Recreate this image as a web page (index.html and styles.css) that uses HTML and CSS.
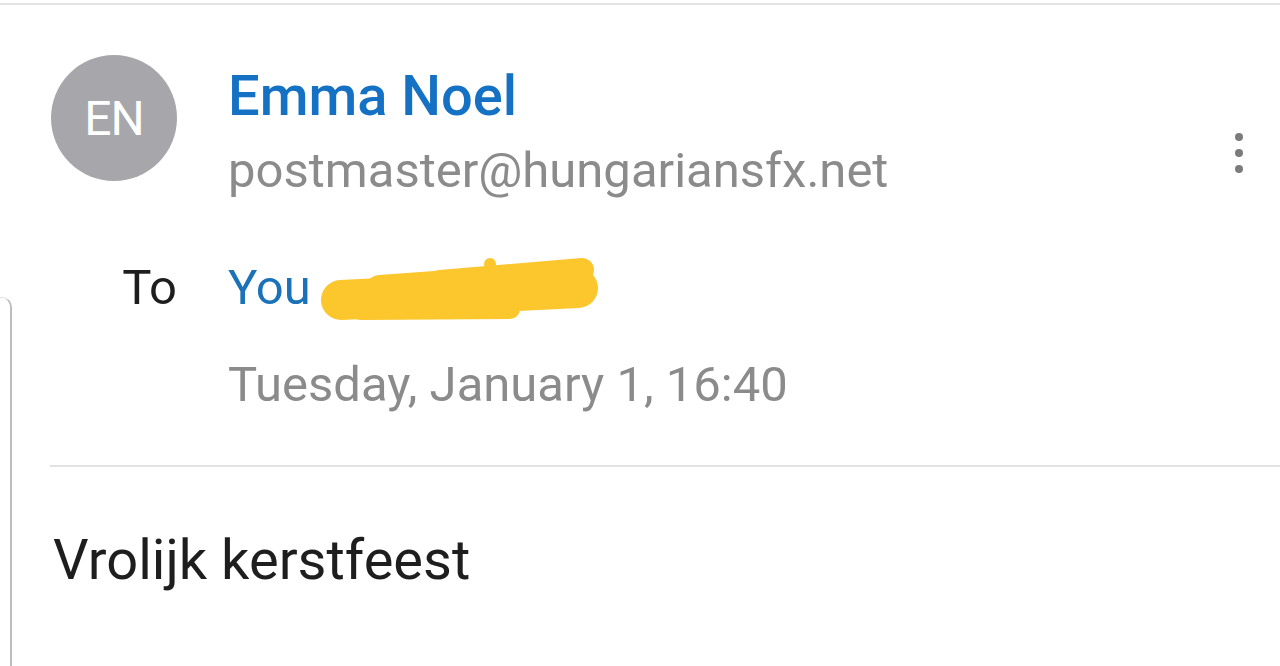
FILE: index.html
```html
<!DOCTYPE html>
<html lang="en">
<head>
<meta charset="utf-8">
<title>Message</title>
<link rel="stylesheet" href="styles.css">
</head>
<body>
<div class="topline"></div>
<div class="page">
  <div class="edge"></div>
  <div class="main">
    <div class="header">
      <div class="avatar">EN</div>
      <div class="sender">
        <div class="name">Emma Noel</div>
        <div class="email">postmaster@hungariansfx.net</div>
      </div>
      <div class="kebab" aria-label="More options">
        <span class="dot"></span><span class="dot"></span><span class="dot"></span>
      </div>
      <div class="to-label">To</div>
      <div class="to-value">
        <span class="you">You</span>
        <svg class="scribble" width="282" height="70" viewBox="0 0 282 70" aria-hidden="true">
          <g stroke="#fcc62d" stroke-linecap="round" fill="none">
            <path d="M21 46 L258 34" stroke-width="40"/>
            <path d="M60 36 L250 22" stroke-width="30"/>
            <path d="M120 28 L262 16" stroke-width="24"/>
            <path d="M40 56 L190 55" stroke-width="20"/>
          </g>
          <circle cx="170" cy="10" r="6" fill="#fcc62d"/>
        </svg>
      </div>
      <div class="date">Tuesday, January 1, 16:40</div>
    </div>
    <div class="divider"></div>
    <div class="body-text">Vrolijk kerstfeest</div>
  </div>
</div>
</body>
</html>
```
FILE: styles.css
```css
html, body {
  margin: 0;
  padding: 0;
  background: #ffffff;
  height: 100%;
  overflow: hidden;
}

body {
  font-family: Roboto, "Noto Sans", "Liberation Sans", sans-serif;
}

.topline {
  margin-top: 3px;
  height: 2px;
  background: #e4e4e4;
}

.page {
  display: flex;
  align-items: flex-start;
  height: 661px;
}

.edge {
  flex: 0 0 12px;
  margin-top: 292px;
  height: 400px;
  border-top: 1px solid #e2e2e2;
  border-right: 2px solid #bdbdbd;
  border-top-right-radius: 10px;
  box-sizing: border-box;
}

.main {
  flex: 1;
  padding-left: 39px;
}

.header {
  display: grid;
  grid-template-columns: 126px 1fr 40px;
  column-gap: 51px;
  padding-right: 21px;
  margin-top: 50px;
}

.avatar {
  grid-column: 1;
  grid-row: 1;
  width: 126px;
  height: 126px;
  border-radius: 50%;
  background: #a6a6ab;
  color: #ffffff;
  font-size: 48px;
  display: flex;
  align-items: center;
  justify-content: center;
  letter-spacing: -1px;
}

.sender {
  grid-column: 2;
  grid-row: 1;
}

.name {
  margin-top: 11px;
  font-size: 56px;
  font-weight: 500;
  line-height: 60px;
  color: #1471c4;
}

.email {
  margin-top: 17px;
  font-size: 49px;
  line-height: 56px;
  color: #8b8b8b;
}

.kebab {
  grid-column: 3;
  grid-row: 1;
  display: flex;
  flex-direction: column;
  align-items: center;
  gap: 8px;
  margin-top: 78px;
}

.dot {
  width: 8px;
  height: 8px;
  border-radius: 50%;
  background: #7b7b7b;
}

.to-label {
  grid-column: 1;
  grid-row: 2;
  text-align: right;
  margin-top: 61px;
  font-size: 49px;
  line-height: 56px;
  color: #1e1e1e;
}

.to-value {
  grid-column: 2;
  grid-row: 2;
  margin-top: 61px;
  display: flex;
  align-items: center;
  height: 56px;
}

.you {
  font-size: 49px;
  line-height: 56px;
  color: #1b72b8;
}

.scribble {
  margin-left: 9px;
  margin-top: -6px;
  margin-bottom: -8px;
  flex: none;
}

.date {
  grid-column: 2;
  grid-row: 3;
  margin-top: 41px;
  font-size: 49px;
  line-height: 56px;
  color: #8b8b8b;
}

.divider {
  margin-top: 52px;
  margin-left: -1px;
  height: 2px;
  background: #e2e2e2;
}

.body-text {
  margin-top: 61px;
  margin-left: 2px;
  font-size: 56px;
  line-height: 64px;
  color: #1e1e1e;
}
```
